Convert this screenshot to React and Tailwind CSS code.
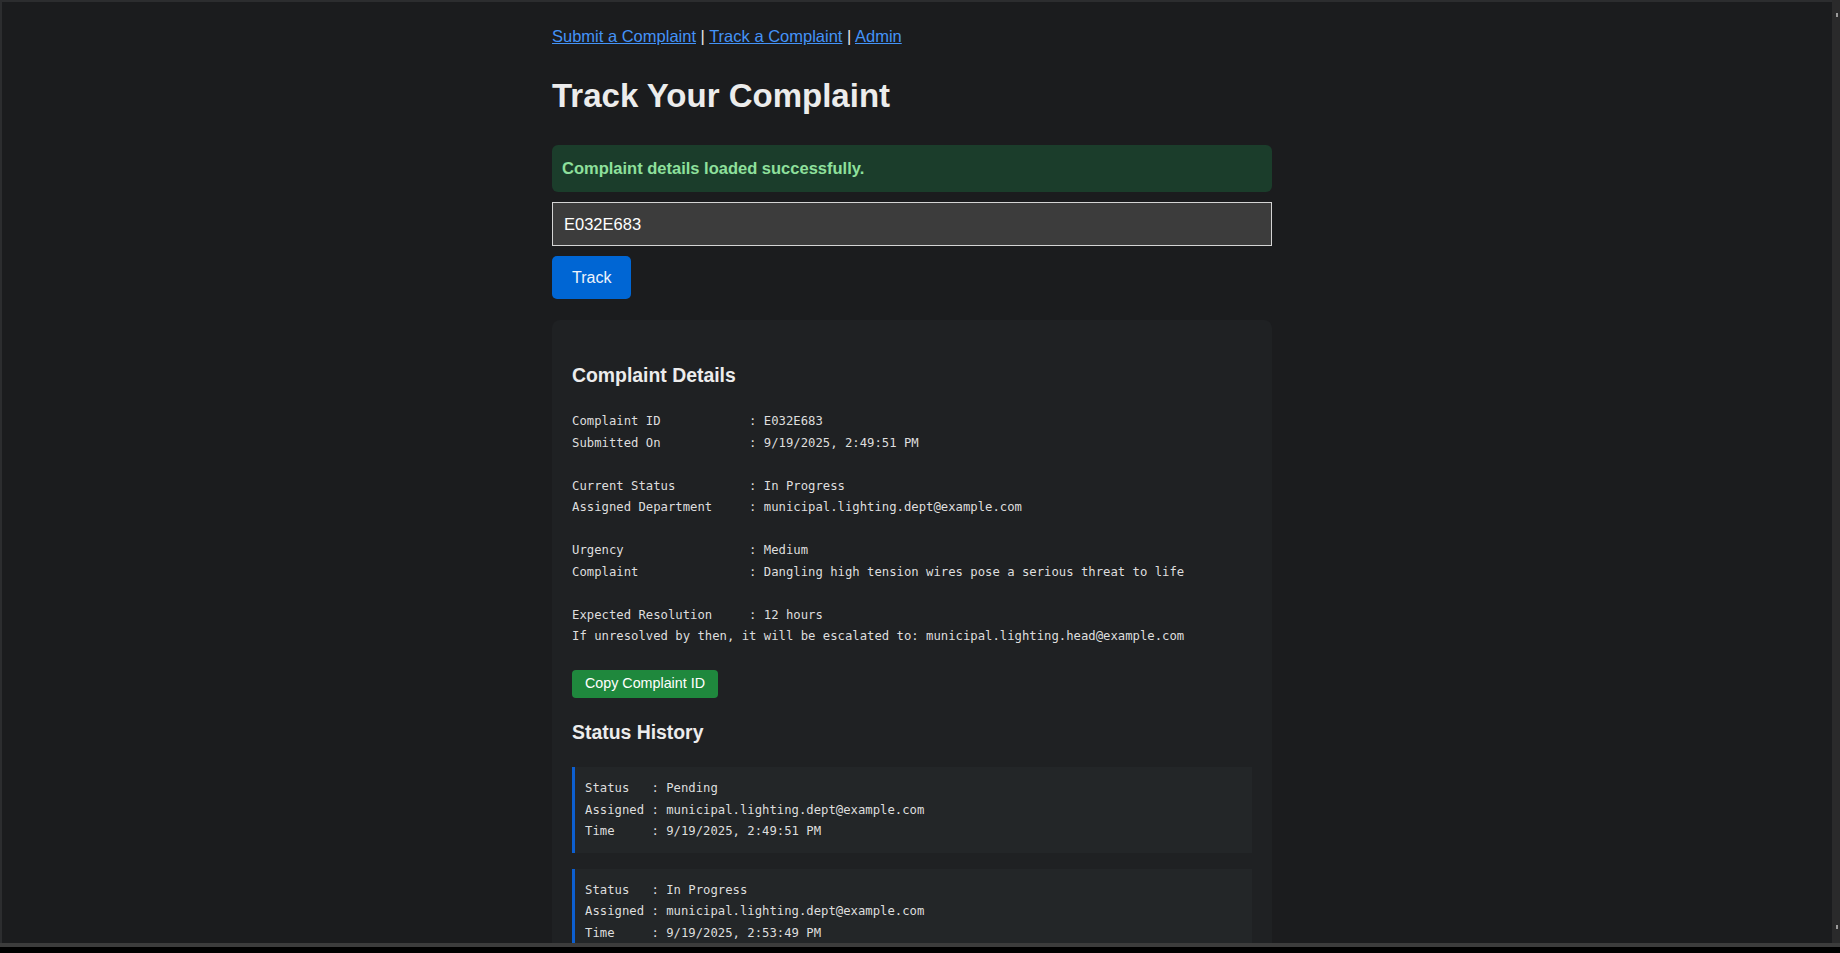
import React from "react";

const mono = "font-['DejaVu_Sans_Mono','Liberation_Mono',monospace]";

const details = [
  "Complaint ID            : E032E683",
  "Submitted On            : 9/19/2025, 2:49:51 PM",
  "",
  "Current Status          : In Progress",
  "Assigned Department     : municipal.lighting.dept@example.com",
  "",
  "Urgency                 : Medium",
  "Complaint               : Dangling high tension wires pose a serious threat to life",
  "",
  "Expected Resolution     : 12 hours",
  "If unresolved by then, it will be escalated to: municipal.lighting.head@example.com",
];

const history = [
  { status: "Pending", assigned: "municipal.lighting.dept@example.com", time: "9/19/2025, 2:49:51 PM" },
  { status: "In Progress", assigned: "municipal.lighting.dept@example.com", time: "9/19/2025, 2:53:49 PM" },
];

export default function App() {
  return (
    <div className="h-[953px] w-full flex flex-col overflow-hidden bg-black font-['Liberation_Sans',Arial,sans-serif]">
      <div className="flex flex-1 min-h-0">
        <div className="flex-1 min-w-0 overflow-hidden bg-[#1b1c1e] border-t-2 border-l-2 border-[#2c2d2f]">
          <div className="pr-[10px]">
            <div className="mx-auto w-[720px] pt-[25px]">
              <nav className="text-[16.5px] leading-[18px] text-[#e6e6e6]">
                <a href="#" className="text-[#4493f8] underline">Submit a Complaint</a>
                {" | "}
                <a href="#" className="text-[#4493f8] underline">Track a Complaint</a>
                {" | "}
                <a href="#" className="text-[#4493f8] underline">Admin</a>
              </nav>
              <h1 className="mt-[32px] text-[33px] leading-[37px] font-bold text-[#ececec]">Track Your Complaint</h1>
              <div className="mt-[31px] rounded-[6px] bg-[#1b3d2b] px-[10px] py-[14px] text-[16.5px] leading-[19px] font-bold text-[#8ee09c]">
                Complaint details loaded successfully.
              </div>
              <div className="mt-[10px] h-[44px] border border-[#d4d4d4] bg-[#3c3c3c] pl-[11px] flex items-center text-[16.5px] text-white">
                E032E683
              </div>
              <button className="mt-[10px] h-[43px] rounded-[5px] bg-[#0066d4] px-[20px] text-[16px] text-[#eef3fb]">Track</button>
              <div className="mt-[21px] rounded-[8px] bg-[#1f2123] p-[20px]">
                <h3 className="mt-[24.5px] text-[19.4px] leading-[21.5px] font-bold text-[#ececec]">Complaint Details</h3>
                <pre className={`mt-[25px] ${mono} text-[12.25px] leading-[21.5px] whitespace-pre text-[#dedede]`}>
                  {details.join("\n")}
                </pre>
                <button className="mt-[22px] h-[28px] rounded-[4px] bg-[#1f883d] px-[13px] text-[14.3px] text-white">Copy Complaint ID</button>
                <h3 className="mt-[24px] text-[19.4px] leading-[21.5px] font-bold text-[#ececec]">Status History</h3>
                <div className="mt-[24px] flex flex-col gap-[16px]">
                  {history.map((h, i) => (
                    <div key={i} className="border-l-[3px] border-[#0d5fd0] bg-[#232628] pl-[10px] pt-[11px] pb-[10px]">
                      <pre className={`${mono} text-[12.25px] leading-[21.5px] whitespace-pre text-[#dedede]`}>
                        {`Status   : ${h.status}\nAssigned : ${h.assigned}\nTime     : ${h.time}`}
                      </pre>
                    </div>
                  ))}
                </div>
              </div>
            </div>
          </div>
        </div>
        <div className="relative w-[8px] bg-[#2a2a2b]">
          <div className="absolute left-[4px] top-[13px] h-[4px] w-[2px] bg-[#9a9a9a]" />
          <div className="absolute left-[4px] top-[925px] h-[4px] w-[2px] bg-[#9a9a9a]" />
        </div>
      </div>
      <div className="h-[4px] bg-[#3c3c3c]" />
      <div className="h-[6px] bg-black" />
    </div>
  );
}
